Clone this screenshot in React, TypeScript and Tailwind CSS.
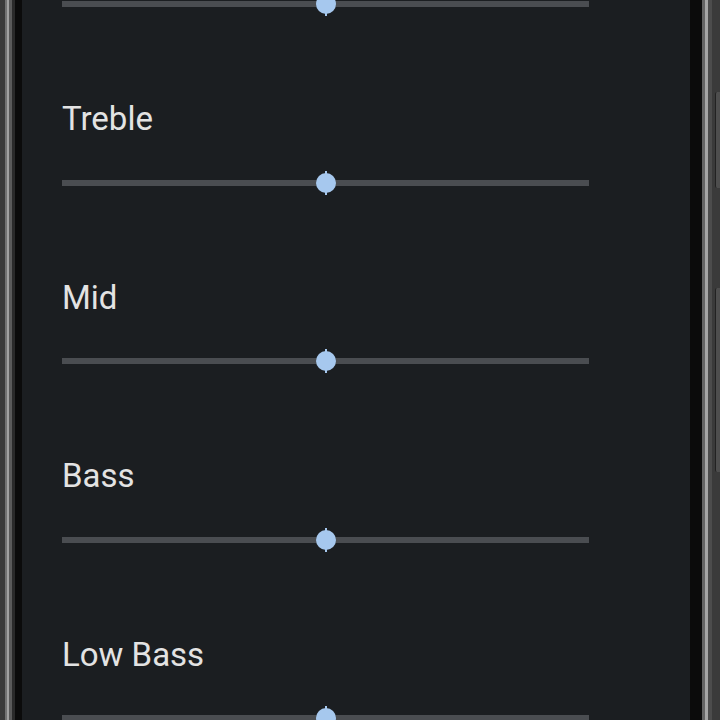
const bands = ["Treble", "Mid", "Bass", "Low Bass"];

function Slider() {
  return (
    <div className="relative flex h-[20px] w-[527px] items-center">
      <div className="h-[6px] w-full bg-[#4a4d51]" />
      <div className="absolute left-[254px] top-[-2px] flex h-[24px] w-[20px] items-center justify-center">
        <div className="absolute h-full w-[2px] bg-[#a6c8ee]" />
        <div className="h-[20px] w-[20px] rounded-full bg-[#a6c8ee]" />
      </div>
    </div>
  );
}

export default function App() {
  return (
    <div className="flex h-[720px] w-[720px] overflow-hidden bg-black">
      {/* left bezel */}
      <div className="flex h-full">
        <div className="w-[5px] bg-[#3a3a3a]" />
        <div className="w-[2px] bg-[#727272]" />
        <div className="w-[2px] bg-[#a2a2a2]" />
        <div className="w-[3px] bg-[#5a5a5a]" />
        <div className="w-[3px] bg-[#2a2a2a]" />
        <div className="w-[7px] bg-[#0b0b0b]" />
      </div>

      {/* equalizer screen */}
      <div className="h-full flex-1 overflow-hidden bg-[#1b1e21] pl-[40px] font-['Roboto',sans-serif] text-[#e3e3e3]">
        <div className="mt-[-6px]">
          <Slider />
          {bands.map((band) => (
            <div key={band}>
              <p className="mb-[33.5px] mt-[85px] h-[40px] text-[33px] leading-[40px]">{band}</p>
              <Slider />
            </div>
          ))}
        </div>
      </div>

      {/* right bezel with side keys */}
      <div className="flex h-full">
        <div className="w-[12px] bg-[#0b0b0b]" />
        <div className="w-[3px] bg-[#636363]" />
        <div className="w-[3px] bg-[#a5a5a5]" />
        <div className="w-[4px] bg-[#4c4c4c]" />
        <div className="flex w-[8px] flex-col items-end bg-[#3a3a3a]">
          <div className="h-[92px]" />
          <div className="h-[96px] w-[5px] rounded-l-[2px] border-l border-[#222] bg-[#4e4e4e]" />
          <div className="h-[100px]" />
          <div className="h-[184px] w-[5px] rounded-l-[2px] border-l border-[#222] bg-[#4e4e4e]" />
        </div>
      </div>
    </div>
  );
}
